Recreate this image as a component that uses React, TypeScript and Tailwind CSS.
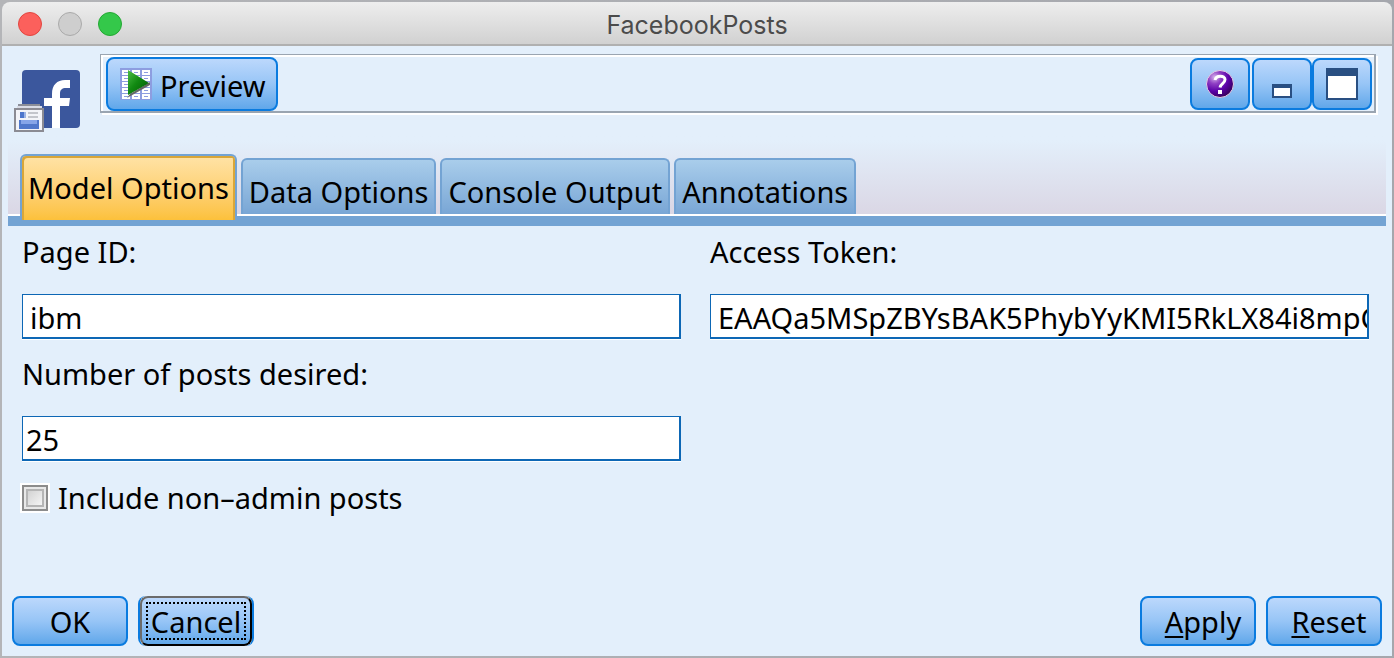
import React, { useState } from "react";

const actionButton =
  "h-[50px] w-[116px] rounded-lg border-2 border-[#0a7bdf] bg-linear-to-b from-[#bcd8fc] via-[#97c5f6] to-[#60a7ea] pt-0.5 text-center whitespace-nowrap";
const iconButton =
  "flex h-[52px] w-[60px] items-center justify-center rounded-lg border-2 border-[#0a7bdf] bg-linear-to-b from-[#bcd8fc] via-[#97c5f6] to-[#60a7ea]";
const field =
  "h-[45px] w-full rounded-none border border-r-2 border-b-2 border-[#0d67b5] bg-white pt-0.5 text-[29px] outline-none shadow-[0_1px_0_#ffffff]";

function NodeLogo() {
  return (
    <svg width="66" height="64" viewBox="0 0 66 64" aria-hidden="true">
      <rect x="8" y="2" width="58" height="58" rx="4" fill="#3b579d" />
      <path
        d="M38 60V38h-8v-8h8v-4c0-9 5-14 13-14h5v8h-4c-4 0-6 2-6 5v5h10l-1 8h-9v22z"
        fill="#fff"
      />
      <path d="M4 36h22v2H4z" fill="#8b8e98" />
      <path d="M3 38h25v3H3z" fill="#d9dce6" />
      <rect x="1" y="41" width="28" height="22" fill="#f3f4f8" stroke="#8b8b93" strokeWidth="2" />
      <rect x="6" y="44" width="6" height="6" fill="#4d76cc" />
      <rect x="10" y="44" width="2" height="6" fill="#9db4e4" />
      <path d="M14 45h10M14 49h10" stroke="#c3c5cb" strokeWidth="2" />
      <rect x="5" y="52" width="20" height="9" fill="#5078cb" />
      <rect x="7" y="52" width="16" height="4" fill="#86a5e8" />
    </svg>
  );
}

function PreviewIcon() {
  return (
    <svg width="32" height="32" viewBox="0 0 32 32" aria-hidden="true">
      <defs>
        <linearGradient id="play" x1="0" y1="0" x2="1" y2="1">
          <stop offset="0" stopColor="#4fbd47" />
          <stop offset="0.450" stopColor="#128a12" />
          <stop offset="1" stopColor="#005500" />
        </linearGradient>
      </defs>
      <rect width="32" height="32" fill="#8d9de0" />
      {[2, 12, 22].map((x) =>
        [2, 8, 14, 20, 26].map((y) => (
          <g key={`${x}-${y}`}>
            <rect x={x} y={y} width="8" height="5" fill="#fff" />
            <rect x={x + 2} y={y + 2} width="4" height="1" fill="#8d9de0" />
          </g>
        )),
      )}
      <path d="M7 30l23-13v-3L10 26z" fill="#666" />
      <path d="M8 2v25l21-12z" fill="url(#play)" />
    </svg>
  );
}

function HelpIcon() {
  return (
    <svg width="28" height="28" viewBox="0 0 28 28" aria-hidden="true">
      <defs>
        <radialGradient id="orb" cx="0.300" cy="0.250" r="0.800">
          <stop offset="0" stopColor="#d6b5ec" />
          <stop offset="0.300" stopColor="#9040c4" />
          <stop offset="0.650" stopColor="#5a00a8" />
          <stop offset="1" stopColor="#360058" />
        </radialGradient>
      </defs>
      <circle cx="14" cy="14" r="13.500" fill="url(#orb)" stroke="#e6cfe6" strokeWidth="1" />
      <path d="M9 10c1-5 10-5 10-.5 0 4-4.500 4-5 8" fill="none" stroke="#fff" strokeWidth="3" />
      <rect x="12" y="20" width="4" height="4" fill="#fff" />
    </svg>
  );
}

const tabs = ["Model Options", "Data Options", "Console Output", "Annotations"];

export default function App() {
  const [active, setActive] = useState(0);
  return (
    <div className="flex min-h-screen flex-col bg-[#b4b5b8] bg-linear-to-r from-[#b4b5b8] to-[#a5a7ad] p-0.5 font-['Noto_Sans','Open_Sans',sans-serif] text-[29px] leading-8 text-black">
      <header className="relative flex h-11 items-center justify-center rounded-t-lg border-b-2 border-[#b0b0b0] bg-linear-to-b from-[#eeeeee] to-[#d1d1d1] pt-0.5">
        <div className="absolute left-4 flex gap-4">
          <button aria-label="Close" className="size-6 rounded-full border border-[#e2463f] bg-[#fc605c]" />
          <button aria-label="Minimize" className="size-6 rounded-full border border-[#aaaaaa] bg-[#cecece]" />
          <button aria-label="Zoom" className="size-6 rounded-full border border-[#24a833] bg-[#34c84a]" />
        </div>
        <h1 className="pt-0.5 font-[Inter,Roboto,sans-serif] text-[25px] text-[#4b4b4b]">FacebookPosts</h1>
      </header>

      <main className="flex grow flex-col bg-[#e3effb]">
        <div className="flex items-start gap-5 pt-2 pr-4 pl-3">
          <div className="pt-3.5">
            <NodeLogo />
          </div>
          <div className="flex h-[59px] grow items-end justify-between border border-r-2 border-b-2 border-[#9aa5b1] pr-0.5 pl-[5px] shadow-[inset_2px_2px_0_#ffffff,2px_2px_0_#ffffff]">
            <button className="flex h-[54px] w-[172px] items-center gap-2 rounded-lg border-2 border-[#0a7bdf] bg-linear-to-b from-[#bcd8fc] via-[#97c5f6] to-[#60a7ea] pl-3">
              <PreviewIcon />
              <span className="pt-1">Preview</span>
            </button>
            <div className="flex pb-px">
              <button aria-label="Help" className={iconButton + " mr-0.5"}>
                <HelpIcon />
              </button>
              <button aria-label="Minimize panel" className={iconButton}>
                <svg width="20" height="30" viewBox="0 0 20 30" aria-hidden="true">
                  <path d="M0 15h20v14H0z" fill="#294f82" />
                  <path d="M2 19h16v8H2z" fill="#fff" />
                </svg>
              </button>
              <button aria-label="Maximize panel" className={iconButton}>
                <svg width="32" height="32" viewBox="0 0 32 32" aria-hidden="true">
                  <path d="M0 0h32v32H0z" fill="#294f82" />
                  <path d="M2 8h28v22H2z" fill="#fff" />
                </svg>
              </button>
            </div>
          </div>
        </div>

        <div
          role="tablist"
          className="mx-1.5 flex h-[94px] items-end gap-1 border-b-10 border-[#73a3d3] bg-linear-to-b from-[#e3effb] from-10% to-[#dad6e4] pl-3 shadow-[inset_0_-2px_0_#ffffff]"
        >
          {tabs.map((tab, i) => (
            <button
              key={tab}
              role="tab"
              aria-selected={i === active}
              onClick={() => setActive(i)}
              className={
                i === active
                  ? "-mb-1 h-[66px] rounded-t-md border-2 border-b-0 border-[#73a3d3] bg-linear-to-b from-[#ffe3a6] to-[#fcc13a] px-1.5 whitespace-nowrap shadow-[inset_2px_2px_0_#d9a638,inset_-2px_0_0_#d9a638]"
                  : "mb-0.5 h-14 rounded-t-md border-2 border-b-0 border-[#73a3d3] bg-linear-to-b from-[#a9cdeb] to-[#79a6d5] px-1.5 pt-2.5 whitespace-nowrap"
              }
            >
              {tab}
            </button>
          ))}
        </div>

        <form className="flex grow flex-col" onSubmit={(e) => e.preventDefault()}>
          <div className="grid grid-cols-2 gap-x-[29px] pr-[23px] pl-5">
            <div className="flex h-[122px] flex-col gap-[26px] pt-2.5">
              <label htmlFor="page">Page ID:</label>
              <input id="page" defaultValue="ibm" className={field + " px-[7px]"} />
            </div>
            <div className="flex h-[122px] flex-col gap-[26px] pt-2.5">
              <label htmlFor="token">Access Token:</label>
              <input
                id="token"
                defaultValue="EAAQa5MSpZBYsBAK5PhybYyKMI5RkLX84i8mpC"
                className={field + " pl-[7px]"}
              />
            </div>
            <div className="flex h-[122px] flex-col gap-[26px] pt-2.5">
              <label htmlFor="count">Number of posts desired:</label>
              <input id="count" defaultValue="25" className={field + " px-[3px]"} />
            </div>
          </div>
          <div className="flex items-center gap-2.5 pt-3 pl-5">
            <input
              id="nonadmin"
              type="checkbox"
              className="size-[26px] appearance-none border-2 border-[#8c8c8c] bg-linear-to-br from-[#c9c9c9] to-[#ffffff] shadow-[0_0_0_2px_#ffffff,inset_0_0_0_2px_#e8e8e8,inset_0_0_0_4px_#b5b5b5] checked:bg-[#73a3d3]"
            />
            <label htmlFor="nonadmin">Include non–admin posts</label>
          </div>

          <footer className="mt-auto flex justify-between px-2.5 pb-2.5">
            <div className="flex gap-2.5">
              <button className={actionButton}>OK</button>
              <button className="h-[50px] w-[116px] rounded-lg border-x-2 border-[#0a7bdf]">
                <span className="flex h-full items-center justify-center rounded-lg border-2 border-t-[#6b6b6b] border-r-black border-b-black border-l-[#6b6b6b] bg-linear-to-b from-[#bcd8fc] via-[#97c5f6] to-[#60a7ea] p-1">
                  <span className="flex h-full w-full items-center justify-center border-2 border-dotted border-black pt-0.5">
                    Cancel
                  </span>
                </span>
              </button>
            </div>
            <div className="flex gap-2.5">
              <button className={actionButton + " pl-2.5"}>
                <span className="underline decoration-2 underline-offset-3">A</span>pply
              </button>
              <button className={actionButton + " pl-2.5"}>
                <span className="underline decoration-2 underline-offset-3">R</span>eset
              </button>
            </div>
          </footer>
        </form>
      </main>
    </div>
  );
}
